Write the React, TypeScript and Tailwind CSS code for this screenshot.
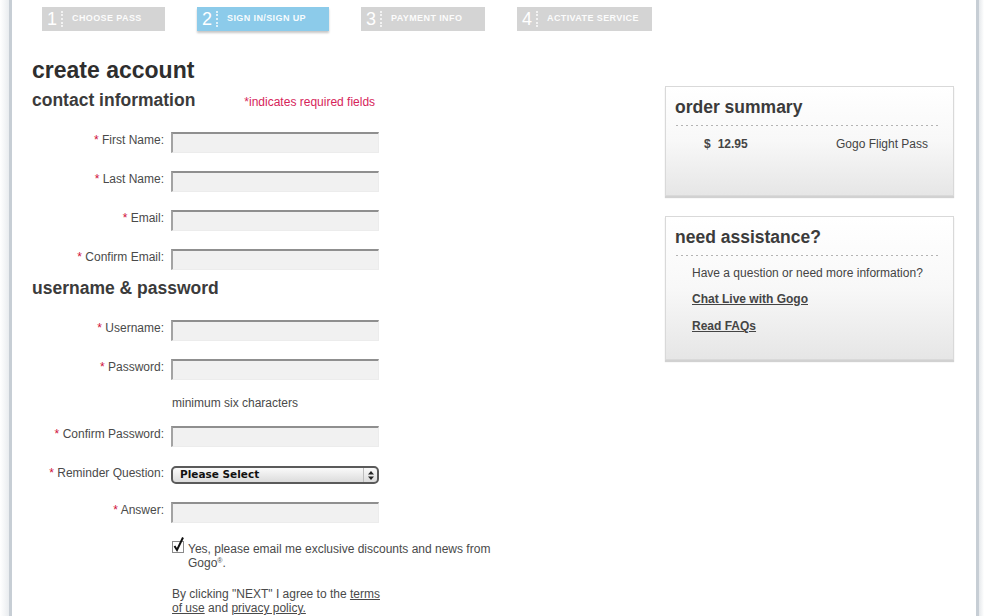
import React from "react";

const font = { fontFamily: '"Liberation Sans", Arial, Helvetica, sans-serif' };

function Step({ n, label, active, w }: { n: string; label: string; active?: boolean; w: string }) {
  return (
    <div
      className={`h-[24px] flex items-center ${w} ${
        active ? "bg-[#8ccbea] shadow-[0_2px_2px_rgba(0,0,0,0.22)]" : "bg-[#d4d4d4]"
      }`}
    >
      <span className="ml-[5px] w-[9px] text-[18px] leading-[20px] text-white font-normal">{n}</span>
      <span className="ml-[5px] h-[16px] border-l-2 border-dotted border-white/70" />
      <span className="ml-[9px] text-[9px] font-bold uppercase tracking-[0.4px] text-white/95 whitespace-nowrap">
        {label}
      </span>
    </div>
  );
}

function Input() {
  return (
    <div className="w-[208px] h-[21px] bg-[#f1f1f1] border-t-2 border-l-2 border-t-[#8f8f8f] border-l-[#a3a3a3] border-r border-b border-r-[#ececec] border-b-[#ececec]" />
  );
}

function Row({ label, h = "h-[39px]", children }: { label: string; h?: string; children: React.ReactNode }) {
  return (
    <div className={`flex items-center ${h}`}>
      <div className="w-[152px] pb-[5px] text-right text-[12px] text-[#4a4a4a] whitespace-nowrap">
        <span className="text-[#d0103a]">*</span> {label}
      </div>
      <div className="ml-[7px]">{children}</div>
    </div>
  );
}

function Select() {
  return (
    <div className="w-[208px] h-[18px] rounded-[5px] border-2 border-[#5a5a5a] bg-linear-to-b from-[#fafafa] to-[#dcdcdc] flex items-center">
      <span className="ml-[7px] font-bold text-[#111] flex-1" style={{ fontFamily: '"DejaVu Sans", sans-serif', fontSize: "10.5px" }}>
        Please Select
      </span>
      <span className="h-full border-l border-[#bdbdbd] w-[14px] flex flex-col items-center justify-center">
        <svg width="6" height="9" viewBox="0 0 6 9">
          <path d="M3 0 L6 3.5 L0 3.5 Z" fill="#222" />
          <path d="M3 9 L6 5.5 L0 5.5 Z" fill="#222" />
        </svg>
      </span>
    </div>
  );
}

function Box({ title, h, children }: { title: string; h: string; children: React.ReactNode }) {
  return (
    <div className={`w-[289px] ${h} border border-[#d9d9d9] bg-linear-to-b from-white via-[#f8f8f8] to-[#e6e6e6] shadow-[0_2px_1px_rgba(0,0,0,0.18)]`}>
      <div className="pt-[9px] pl-[9px] h-[31px] text-[17.5px] leading-[22px] font-bold text-[#3b3b3b]">{title}</div>
      <div className="mt-[7px] ml-[10px] mr-[13px] h-[1px] bg-[repeating-linear-gradient(to_right,#b4b4b4_0_2px,transparent_2px_5px)]" />
      {children}
    </div>
  );
}

export default function App() {
  return (
    <div className="w-[984px] h-[616px] flex bg-white overflow-hidden" style={font}>
      <div className="w-[9px] h-full bg-linear-to-r from-white to-[#e9ecef]" />
      <div className="w-[970px] h-full border-l-[3px] border-r-[3px] border-[#c7ced5] bg-white flex flex-col">
        {/* steps */}
        <div className="pl-[30px] pt-[7px] flex gap-[32px]">
          <Step n="1" label="Choose Pass" w="w-[123px]" />
          <Step n="2" label="Sign In/Sign Up" active w="w-[132px]" />
          <Step n="3" label="Payment Info" w="w-[124px]" />
          <Step n="4" label="Activate Service" w="w-[135px]" />
        </div>

        <div className="flex">
          {/* left column */}
          <div className="w-[653px] flex flex-col">
            <div className="mt-[26px] pl-[20px] h-[26px] leading-[26px] text-[23px] font-bold text-[#2e2e2e]">
              create account
            </div>
            <div className="mt-[6px] pl-[20px] h-[22px] flex items-baseline">
              <span className="text-[17.5px] leading-[22px] font-bold text-[#3b3b3b]">contact information</span>
              <span className="ml-[49px] text-[12px] text-[#d6245a]">*indicates required fields</span>
            </div>
            <div className="mt-[12px]">
              <Row label="First Name:"><Input /></Row>
              <Row label="Last Name:"><Input /></Row>
              <Row label="Email:"><Input /></Row>
              <Row label="Confirm Email:"><Input /></Row>
            </div>
            <div className="pl-[20px] h-[18px] leading-[18px] text-[17.5px] font-bold text-[#3b3b3b]">
              username &amp; password
            </div>
            <div className="mt-[14px]">
              <Row label="Username:"><Input /></Row>
              <Row label="Password:"><Input /></Row>
            </div>
            <div className="mt-[7px] pl-[160px] h-[14px] leading-[14px] text-[12px] text-[#4a4a4a]">
              minimum six characters
            </div>
            <div className="mt-[7px]">
              <Row label="Confirm Password:"><Input /></Row>
              <Row label="Reminder Question:" h="h-[38px]"><Select /></Row>
              <Row label="Answer:" h="h-[37px]"><Input /></Row>
            </div>
            <div className="mt-[11px] pl-[160px] flex">
              <div className="w-[16px] h-[14px] relative">
                <svg width="14" height="17" viewBox="0 0 14 17" className="absolute left-0 top-[-6px]">
                  <rect x="0.5" y="5.5" width="11" height="11" fill="white" stroke="#8a8a8a" />
                  <path d="M2.5 10 L5 14 L11 1.5" fill="none" stroke="#111" strokeWidth="2" />
                </svg>
              </div>
              <div className="w-[320px] text-[12px] leading-[14px] text-[#4a4a4a]">
                <div>Yes, please email me exclusive discounts and news from</div>
                <div>
                  Gogo<span className="text-[7px] align-top leading-[10px]">®</span>.
                </div>
              </div>
            </div>
            <div className="mt-[17px] pl-[160px]">
              <div className="text-[12px] leading-[14px] text-[#4a4a4a]">
                <div>
                  By clicking "NEXT" I agree to the <span className="underline">terms</span>
                </div>
                <div>
                  <span className="underline">of use</span> and <span className="underline">privacy policy.</span>
                </div>
              </div>
            </div>
          </div>

          {/* right column */}
          <div className="w-[289px] flex flex-col">
            <div className="mt-[55px]">
              <Box title="order summary" h="h-[110px]">
                <div className="mt-[11px] h-[14px] leading-[14px] flex text-[12px] text-[#444] pl-[38px] pr-[25px]">
                  <span className="font-bold">$</span>
                  <span className="ml-[7px] font-bold">12.95</span>
                  <span className="ml-auto">Gogo Flight Pass</span>
                </div>
              </Box>
            </div>
            <div className="mt-[20px]">
              <Box title="need assistance?" h="h-[144px]">
                <div className="pl-[26px] text-[12px] leading-[14px] text-[#444]">
                  <div className="mt-[10px]">Have a question or need more information?</div>
                  <div className="mt-[12px] font-bold underline">Chat Live with Gogo</div>
                  <div className="mt-[13px] font-bold underline">Read FAQs</div>
                </div>
              </Box>
            </div>
          </div>
        </div>
      </div>
      <div className="w-[5px] h-full bg-linear-to-r from-[#e6e9ec] to-white" />
    </div>
  );
}
